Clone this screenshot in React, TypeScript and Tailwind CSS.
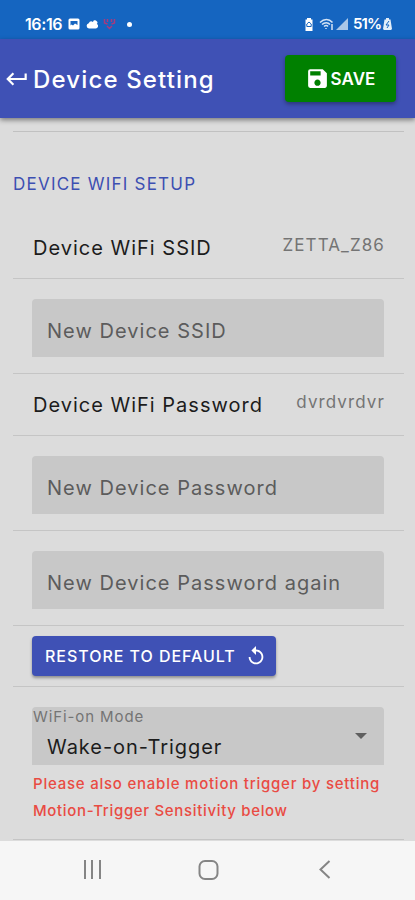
import React from 'react';
import { MdReplay, MdSave, MdKeyboardReturn } from 'react-icons/md';

interface ValueRowProps {
  label: string;
  value: string;
}

function StatusBar() {
  return (
    <div className="flex h-[39px] items-end justify-between bg-[#1565c0] pr-[23px] pb-[6px] pl-[25px] text-white">
      <div className="flex h-[18px] items-center">
        <span className="w-[43px] text-[16px] leading-[18px] font-semibold tracking-[-0.4px]">16:16</span>
        <svg width="12" height="12" viewBox="0 0 12 12">
          <rect x="0.5" y="0.5" width="11" height="11" rx="1.5" fill="white" />
          <path d="M2.5 3h7v4L7 5.500 5 7.500 3.500 6.500 2.500 7.500z" fill="#1565c0" />
        </svg>
        <svg className="ml-[6px]" width="12" height="10" viewBox="0 0 12 10">
          <path d="M3 9.500a2.700 2.700 0 0 1-.3-5.300A3 3 0 0 1 7 3 2 2 0 0 1 10.500 2a2 2 0 0 1 .3 3A2.400 2.400 0 0 1 9.500 9.500z" fill="white" />
        </svg>
        <svg className="ml-[5px]" width="13" height="12" viewBox="0 0 13 12" fill="none" stroke="#a83a7d" strokeWidth="1.5">
          <path d="M1.500 1v4l3 1M11.500 1v4l-3 1M4.500 1v3M8.500 1v3M4 8l2.500 2.500L9 8" />
        </svg>
        <span className="ml-[11px] size-[5px] rounded-full bg-white" />
      </div>
      <div className="flex h-[18px] items-center">
        <svg width="10" height="13" viewBox="0 0 10 13">
          <path d="M3 0h4v1.500h1.500V13h-7V1.500H3z" fill="white" />
          <path d="M5 4l2.200 2v2.500H2.800V6z" fill="none" stroke="#1565c0" />
        </svg>
        <svg className="ml-[5px]" width="15" height="12" viewBox="0 0 15 12" fill="none" stroke="#d5e4f5" strokeWidth="1.5">
          <path d="M1 4.500c4-4 9-4 12.500 0M3 6.500c2.500-2.500 6-2.500 8 0M5 8.500c1.500-1.300 3-1.300 4 0M7 10v1M13 6v6" />
        </svg>
        <svg className="ml-[2px]" width="12" height="12" viewBox="0 0 12 12">
          <path d="M0 12L12 0v12z" fill="#a9c7e8" />
        </svg>
        <span className="ml-[5px] w-[30px] text-[15px] leading-[18px] font-semibold tracking-[-0.9px]">51%</span>
        <svg width="9" height="12" viewBox="0 0 9 12">
          <path d="M3 0h3v1.500h1.500L9 11 8 12H1L0 11 1.500 1.500H3z" fill="#e3eef9" />
          <path d="M6 3L3 7h3L4 10" fill="none" stroke="#1565c0" />
        </svg>
      </div>
    </div>
  );
}

function ValueRow({ label, value }: ValueRowProps) {
  return (
    <div className="flex h-[62px] items-start justify-between border-b border-[#c5c5c5] pr-[19px] pl-[20px] whitespace-nowrap">
      <span className="pt-[17px] text-[20px] leading-[28px] tracking-[1px] text-[#1c1c1c]">{label}</span>
      <span className="pt-[16px] text-[17px] leading-[24px] tracking-[1.1px] text-[#747474]">{value}</span>
    </div>
  );
}

function TextField({ placeholder }: { placeholder: string }) {
  return (
    <div className="h-[95px] border-b border-[#c5c5c5] px-[19px] pt-[20px]">
      <input
        type="text"
        placeholder={placeholder}
        className="block h-[58px] w-[352px] rounded-t-[4px] bg-[#c8c8c8] pt-[5px] pl-[15px] text-[20px] tracking-[1.03px] outline-none placeholder:text-[#5c5c5c]"
      />
    </div>
  );
}

export default function App() {
  return (
    <div className="flex h-[900px] w-[415px] flex-col overflow-hidden bg-[#dcdcdc] font-['Inter','Noto_Sans',sans-serif]">
      <StatusBar />

      <header className="z-10 flex h-[79px] shrink-0 items-center justify-between bg-[#3f51b5] pr-[19px] pl-[4px] text-white shadow-[0_2px_5px_rgba(0,0,0,0.45)]">
        <div className="flex items-center">
          <MdKeyboardReturn size={26} />
          <h1 className="ml-[3px] pt-[2px] text-[24px] font-medium tracking-[1.15px] whitespace-nowrap">Device Setting</h1>
        </div>
        <button className="flex h-[47px] w-[111px] items-center justify-center rounded-[4px] bg-[#008000] text-[17px] font-semibold shadow-[0_2px_4px_rgba(0,0,0,0.35)]">
          <MdSave size={25} />
          <span className="pt-[2px] tracking-[0.1px]">SAVE</span>
        </button>
      </header>

      <main className="flex grow flex-col pr-[11px] pl-[13px]">
        <div className="h-[14px] shrink-0 border-b border-[#c1c1c1]" />
        <h2 className="h-[85px] shrink-0 pt-[40px] text-[17px] leading-[25px] tracking-[1.22px] text-[#3c4fb2]">
          DEVICE WIFI SETUP
        </h2>

        <ValueRow label="Device WiFi SSID" value="ZETTA_Z86" />
        <TextField placeholder="New Device SSID" />
        <ValueRow label="Device WiFi Password" value="dvrdvrdvr" />
        <TextField placeholder="New Device Password" />
        <TextField placeholder="New Device Password again" />

        <div className="h-[61px] shrink-0 border-b border-[#c5c5c5] pt-[10px] pl-[19px]">
          <button className="flex h-[40px] w-[244px] items-center rounded-[4px] bg-[#3f51b5] pl-[13px] text-left text-[16px] font-medium tracking-[0.96px] whitespace-nowrap text-white shadow-[0_2px_3px_rgba(0,0,0,0.35)]">
            <span className="w-[200px]">RESTORE TO DEFAULT</span>
            <MdReplay size={22} />
          </button>
        </div>

        {/* WiFi-on mode select */}
        <div className="h-[153px] shrink-0 border-b border-[#c5c5c5] pt-[20px] pl-[19px] whitespace-nowrap">
          <div className="flex h-[58px] w-[352px] items-center justify-between rounded-t-[4px] bg-[#c8c8c8] pr-[17px]">
            <div className="h-[58px]">
              <div className="pl-px text-[15px] leading-[20px] tracking-[0.9px] text-[#747474]">WiFi-on Mode</div>
              <div className="mt-[6px] pl-[15px] text-[20px] leading-[29px] tracking-[0.95px] text-[#1c1c1c]">
                Wake-on-Trigger
              </div>
            </div>
            <svg width="12" height="6" viewBox="0 0 12 6">
              <path d="M0 0h12L6 6z" fill="#5f5f5f" />
            </svg>
          </div>
          <p className="pt-[5px] pl-px text-[15px] leading-[27px] font-medium text-[#e94b43]">
            <span className="tracking-[0.77px]">Please also enable motion trigger by setting</span>
            <br />
            <span className="tracking-[0.67px]">Motion-Trigger Sensitivity below</span>
          </p>
        </div>
      </main>

      <nav className="flex h-[59px] shrink-0 items-start bg-[#f6f6f6] pt-[19px] pl-[82px]">
        <svg width="20" height="20" viewBox="0 0 20 20" stroke="#858585" strokeWidth="2">
          <path d="M3 0v19M10 0v19M18 0v19" />
        </svg>
        <svg className="ml-[96px]" width="21" height="20" viewBox="0 0 21 20" fill="none" stroke="#858585" strokeWidth="2">
          <rect x="1.5" y="1" width="18" height="18" rx="5.5" />
        </svg>
        <svg className="ml-[99px]" width="14" height="20" viewBox="0 0 14 20" fill="none" stroke="#858585" strokeWidth="2">
          <path d="M11.500 1L2.500 9.500l9 8.500" />
        </svg>
      </nav>
    </div>
  );
}
